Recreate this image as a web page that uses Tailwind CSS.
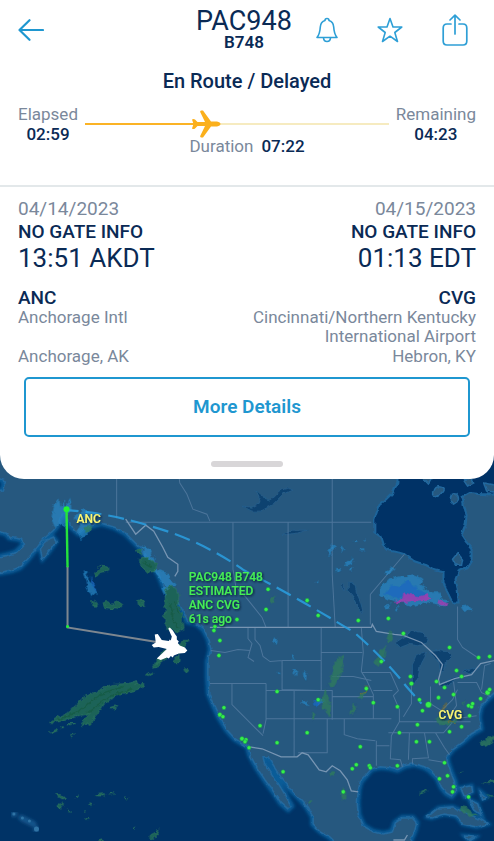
<!DOCTYPE html>
<html lang="en">
<head>
  <meta charset="UTF-8" />
  <meta name="viewport" content="width=device-width, initial-scale=1.0" />
  <title>PAC948 Flight Tracker</title>
  <script src="https://cdn.jsdelivr.net/npm/@tailwindcss/browser@4"></script>
</head>
<body class="min-h-screen flex flex-col bg-[#003366] font-[Roboto,sans-serif] text-[#0a2a55]">

  <!-- Flight Card -->
  <main class="relative z-10 bg-white rounded-b-[24px] pb-3">

    <!-- Top Bar -->
    <header class="grid grid-cols-[1fr_auto_1fr] pl-3 pr-[18px] pt-2 h-[61px]">
      <button aria-label="Back" class="w-[38px] h-[43px] flex justify-center items-center text-[#1f97d0]">
        <svg class="w-[26px] h-[22px]" viewBox="0 0 26 22" fill="none" stroke="currentColor" stroke-width="2.2" stroke-linecap="round" stroke-linejoin="round">
          <path d="M25 11H1.500M11.500 1.200L1.500 11L11.500 20.800" />
        </svg>
      </button>
      <div class="text-center">
        <h1 class="text-[27px] leading-[26px]">PAC948</h1>
        <p class="text-[17px] leading-4 font-semibold">B748</p>
      </div>
      <div class="flex justify-between items-center pl-6 pr-2 h-[43px] text-[#2e9fd6]">
        <button aria-label="Alerts">
          <svg class="w-[22px] h-[26px]" viewBox="0 0 22 26" fill="none" stroke="currentColor" stroke-width="1.600" stroke-linecap="round" stroke-linejoin="round">
            <path d="M9 3.500C9 .8 13 .8 13 3.500C16.500 4.500 17.500 7 17.700 10C18 15 18.500 17.500 21 20.500H1C3.500 17.500 4 15 4.300 10C4.500 7 5.500 4.500 9 3.500Z" />
            <path d="M7.500 20.800C7.800 25.800 14.200 25.800 14.500 20.800" />
          </svg>
        </button>
        <button aria-label="Favorite">
          <svg class="w-[26px] h-[26px]" viewBox="0 0 26 26" fill="none" stroke="currentColor" stroke-width="1.600" stroke-linejoin="round">
            <path d="M13 1.500L16 10H24.800L17.800 15.500L20.500 24.500L13 19.200L5.500 24.500L8.200 15.500L1.200 10H10Z" />
          </svg>
        </button>
        <button aria-label="Share">
          <svg class="w-[26px] h-8" viewBox="0 0 26 32" fill="none" stroke="currentColor" stroke-width="1.700" stroke-linecap="round" stroke-linejoin="round">
            <path d="M9 10H5Q1.200 10 1.200 14V27Q1.200 31 5 31H21Q24.800 31 24.800 27V14Q24.800 10 21 10H17" />
            <path d="M13 20V1.200M8 6L13 1.200L18 6" />
          </svg>
        </button>
      </div>
    </header>

    <!-- Progress -->
    <section class="px-[18px] pt-2 pb-[29px] border-b-2 border-[#e3e8ea]">
      <h2 class="text-center text-[20px] leading-6 font-medium">En Route / Delayed</h2>
      <div class="flex items-center mt-[11px] leading-5 text-center">
        <div>
          <p class="text-[17px] leading-5 text-[#7a889b]">Elapsed</p>
          <p class="text-[17px] leading-5 font-medium">02:59</p>
        </div>
        <div class="relative flex-1 mx-[7px] h-0.5 bg-[#f6ebc0]">
          <div class="h-0.5 bg-[#fbb325]" style="width: 40%"></div>
          <svg class="absolute left-[35%] top-1/2 -translate-y-1/2 w-[30px] h-7 text-[#fbb01c]" viewBox="0 0 30 28" fill="currentColor">
            <path d="M1 9.500Q2.500 8.500 4 9.500L6.500 12H14L9.200 2Q8.800 .6 10.200 .5H12L20 11.500H26Q29.500 12.200 29.500 14T26 16.500H20L12 27.500H10.200Q8.800 27.400 9.200 26L14 16H6.500L4 18.500Q2.500 19.500 1 18.500L2.500 14Z" />
          </svg>
        </div>
        <div>
          <p class="text-[17px] leading-5 text-[#7a889b]">Remaining</p>
          <p class="text-[17px] leading-5 font-medium">04:23</p>
        </div>
      </div>
      <p class="-mt-2 flex justify-center gap-2 text-[17px] leading-5">
        <span class="text-[#7a889b]">Duration</span>
        <span class="font-medium">07:22</span>
      </p>
    </section>

    <!-- Airports -->
    <section class="flex justify-between px-[18px] pt-[10px]">
      <div>
        <p class="text-[19px] leading-[23px] text-[#7a889b]">04/14/2023</p>
        <p class="text-[19px] leading-[23px] font-medium">NO GATE INFO</p>
        <p class="text-[26px] leading-[30px]">13:51 AKDT</p>
        <h3 class="mt-[15px] text-[19px] leading-5 font-medium">ANC</h3>
        <p class="text-[17px] leading-[19px] text-[#7a889b]">Anchorage Intl</p>
        <p class="mt-5 text-[17px] leading-[19px] text-[#7a889b]">Anchorage, AK</p>
      </div>
      <div class="text-right">
        <p class="text-[19px] leading-[23px] text-[#7a889b]">04/15/2023</p>
        <p class="text-[19px] leading-[23px] font-medium">NO GATE INFO</p>
        <p class="text-[26px] leading-[30px]">01:13 EDT</p>
        <h3 class="mt-[15px] text-[19px] leading-5 font-medium">CVG</h3>
        <p class="text-[17px] leading-[19px] text-[#7a889b]">Cincinnati/Northern Kentucky<br />International Airport</p>
        <p class="mt-px text-[17px] leading-[19px] text-[#7a889b]">Hebron, KY</p>
      </div>
    </section>

    <div class="px-6 pt-[11px]">
      <button class="w-full h-[60px] border-2 border-[#1f97d0] rounded-[5px] text-[19px] font-semibold text-[#1f97d0]">More Details</button>
    </div>
    <div class="mx-auto mt-6 w-[72px] h-1.5 rounded-full bg-[#d8d6d8]"></div>
  </main>

  <!-- Map -->
  <section class="relative -mt-6 flex-1 min-h-[385px]">
    <svg class="absolute inset-0 w-full h-full" viewBox="0 456 494 385" preserveAspectRatio="xMidYMax slice" font-family="Roboto, sans-serif">
      <defs>
        <filter id="glow" x="-10%" y="-10%" width="120%" height="120%"><feGaussianBlur stdDeviation="1.800" /></filter>
        <filter id="shade"><feDropShadow dx="1" dy="1" stdDeviation="0.800" flood-color="#00142b" /></filter>
        <filter id="rough" x="-5%" y="-5%" width="110%" height="110%">
          <feTurbulence type="fractalNoise" baseFrequency="0.200" numOctaves="2" seed="4" />
          <feDisplacementMap in="SourceGraphic" scale="6" xChannelSelector="R" yChannelSelector="G" />
        </filter>
        <filter id="coast" x="-5%" y="-5%" width="110%" height="110%">
          <feTurbulence type="fractalNoise" baseFrequency="0.150" numOctaves="2" seed="9" />
          <feDisplacementMap in="SourceGraphic" scale="4" xChannelSelector="R" yChannelSelector="G" />
        </filter>
        <path id="land" d="M-10 450V476L6 482L3 492L-10 494V530L7 534L10 538L22 540L25 545L17 553L8 556L-10 560V575L12 571L20 568L28 560L36 550L45 539L54 531L58 526L61 518L66 513L69 520L71 527L79 534L84 530L90 527L102 524L115 528L126 534L134 542L143 551L147 560L155 568L160 577L164 587L170 594L178 602L184 613L188 622L197 624L204 630L209 640L211 650L208 662L208 677L209 694L214 706L219 717L227 730L235 739L243 744L248 747L250 755L257 768L265 780L273 791L281 803L288 809L291 806L285 795L279 785L271 773L264 763L263 757L268 757L275 768L282 779L291 790L301 800L307 807L313 817L313 824L320 831L330 837L342 850H410V840L414 831L416 823L412 818L402 818L395 823L392 832L383 834L373 832L363 826L358 815L357 803L358 790L360 782L366 775L371 769L380 767L390 768L397 770L404 766L414 764L424 767L429 770L437 778L441 787L446 793L451 796L455 791L454 782L450 772L447 763L446 757L452 749L462 742L471 734L480 729L478 717L480 707L486 700L505 683V450Z" />
        <path id="water" d="M398 450L397 483L393 493L386 500L379 506L374 520L374 533L381 538L384 547L388 551L397 553L404 555L414 562L426 566L435 571L443 573L443 582L446 591L452 603L458 603L457 589L455 580L458 572L466 569L471 561L471 549L465 542L461 536L465 526L466 516L463 505L462 498L469 494L480 495L505 496V450Z" />
        <path id="isles" d="M41 550L46 541L54 538L57 542L50 552L43 560ZM432 494Q433 486 440 488Q446 489 439 496Q434 500 432 494ZM450 499Q451 494 456 495Q461 501 453 505Q449 503 450 499ZM463 481L469 479L473 484L467 487ZM421 478L428 485L433 477ZM483 484L486 492L494 493V486ZM452 560L457 554L462 560L461 566L455 566ZM427 817L438 808L452 807L465 813L479 819L487 824L476 827L462 824L456 816L444 814L431 818ZM460 788L471 786L472 792L464 797ZM469 800L477 804L481 815L474 810ZM480 792L486 797L482 799ZM464 836L475 837L469 841Z" />
      </defs>

      <!-- coastlines -->
      <g fill="none" stroke="#0b68a6" stroke-width="6" opacity="0.800" filter="url(#glow)">
        <use href="#land" /><use href="#isles" stroke-width="4" />
      </g>
      <g filter="url(#coast)">
        <use href="#land" fill="#28587f" stroke="#23699f" stroke-width="1.500" />
        <use href="#water" fill="#003366" stroke="#1f659b" stroke-width="2" />
        <use href="#isles" fill="#28587f" stroke="#23699f" stroke-width="1.500" />
      </g>
      <path fill="none" stroke="#14588f" stroke-width="6" stroke-linecap="round" opacity="0.900" filter="url(#glow)" d="M14 814h1M22 818L34 824M37 829v1" />
      <g fill="#2f73a5"><circle cx="14.500" cy="814" r="1.500" /><circle cx="23" cy="818" r="1.500" /><circle cx="30" cy="821" r="1.500" /><circle cx="37" cy="829" r="2.500" /></g>

      <!-- lakes -->
      <g fill="#10436f" stroke="#265f8d" stroke-width="0.800" filter="url(#coast)">
        <path d="M242 507L252 508L261 503L256 492L264 499L270 501L279 492L287 489L292 491L283 495L273 505L261 512L252 512ZM282 536L292 531L307 531L297 534L288 535ZM348 583L354 583L356 592L360 602L363 613L359 612L353 598L348 591ZM341 586L344 585L344 591ZM395 643L406 636L412 631L422 633L429 642L421 646L410 644L400 648ZM412 683L412 665L416 656L426 653L420 664L418 677L414 684ZM429 652L437 651L446 652L451 657L446 662L444 671L440 673L438 660L433 657ZM439 685L452 678L460 676L454 682L442 688ZM462 672L474 668L479 669L469 674Z" />
      </g>

      <!-- borders -->
      <g fill="none" stroke="#5c82a6" stroke-width="1" opacity="0.700">
        <path d="M117 470V519M126 523H371M178 470L180 484L187 495L193 510L207 515L210 522M233 523V570L236 588L246 598L262 618L266 628M288 523V628M332 470V575L335 628M404 555L370 595V625M457 607V640L462 648L477 658M248 628V639L252 644L248 658L254 662M255 628V640L260 646L263 657L270 662L282 661V690L321 691M210 628H248M211 651L225 653L238 650L250 651M321 628V691M321 653H362M282 661L321 661M210 684H266M266 684V720L263 734M232 684V705L263 736M294 691V757M266 691H332V720M266 719H391M327 719V753H298M344 719V735L357 739L375 741M332 697H373M332 677H353L371 681M361 628L363 653L361 672L366 680L373 695V719M362 673H390L398 691L393 696L399 710L399 722L391 736L390 759L400 760L402 767M376 741V766M376 746H389M373 691H392M388 733H443L455 719L476 716M411 685V704L403 717M430 687V704L441 711L452 700L457 690M399 722H470M409 733L408 760M424 733L428 758L412 759V764M435 733L444 748L449 755M428 760L446 763M457 683H476L481 693L490 697M453 682L456 706L449 716M481 690L484 666L490 664" />
      </g>
      <g fill="none" stroke="#7795b3" stroke-width="1.300">
        <path d="M126 520L136 535L146 526L154 532L163 548L168 558L178 565L178 572L175 577M210 628H371L372 625L376 632L394 635L403 636L421 643L435 656L442 665L438 680L439 685L454 679L471 675L480 664L494 661" />
        <path d="M248 747L262 749L281 757L297 757L302 753L308 755L319 770L326 772L332 766L340 771L347 780L351 791L358 792M393 840H404L407 835" />
      </g>

      <!-- weather -->
      <g filter="url(#rough)">
        <g fill="#2788c6" opacity="0.700">
          <path d="M57 503L60 499L61 508L65 502L67 508L71 498L72 512L66 516L67 529L60 525L55 529L52 519L54 509ZM73 517L80 514L84 509L92 514L99 521L92 524L88 535L81 540L78 532L81 525ZM143 546L150 550L155 561L150 569L144 560ZM152 568L166 572L176 586L168 590L160 580ZM84 571L88 572L89 581L94 586L97 594L92 598L87 588L86 580ZM161 588L168 587L171 598L167 602Z" />
          <path d="M380 588L389 579L400 577L412 575L424 580L420 586L430 592L439 592L441 600L449 601L443 606L426 603L412 607L398 602L387 600L380 596ZM384 574L391 568L395 570L388 576ZM383 607L391 604L388 611ZM396 608h2v4h-2zM344 565L353 558L353 563L347 566ZM328 553L332 545L335 548L330 556ZM336 568L340 570L336 573ZM341 547l3 2-2 3zM354 541h3v2h-3zM363 540l3 1-2 2zM360 549h4v2h-4zM350 568h3v3h-3zM460 606L468 605L472 612L463 611ZM315 581h2v3h-2z" />
          <path d="M292 670L297 671L296 677ZM303 672L307 672L306 680L303 678ZM291 655L295 655L293 661ZM278 672h2v3h-2zM274 638l3 1-1 5-3-1zM300 702L307 701L308 707ZM317 700L323 698L324 703L318 706Z" />
        </g>
        <path fill="#1a68bf" opacity="0.800" d="M384 595L392 585L399 587L408 581L417 590L426 594L421 601L402 599L391 597ZM91 577L95 584L97 592L93 586ZM312 703L318 701L322 703L316 707Z" />
        <path fill="#a33bb0" opacity="0.850" d="M394 603L402 599L403 593L411 595L418 597L426 595L432 600L421 601L409 602L398 604ZM439 601L447 604L445 606L438 604Z" />
        <g fill="#1c6458" stroke="#2f7c60" stroke-width="0.800">
          <path d="M50 723L58 718L68 714L76 706L86 697L97 692L113 685L128 684L138 682L136 685L144 684L143 688L130 692L118 695L104 705L98 715L90 724L83 727L83 722L90 714L79 716L68 720L60 722Z" />
          <path d="M166 590L171 587L176 589L179 596L178 606L183 617L184 629L177 632L168 629L165 620ZM141 557L152 561L157 564L156 572L147 573L141 567ZM136 552L142 549L140 555ZM95 574L102 567L109 568L109 572L101 573L97 577ZM103 604L107 602L113 605L120 602L122 606L117 610L105 608ZM92 601L97 604L96 607L93 606ZM138 601L142 601L145 606L139 606Z" />
          <path d="M152 669L157 662L163 661L158 667ZM147 676L152 673L153 674L149 677ZM173 661L179 656L179 663L175 663ZM175 650L184 641L188 641L184 648L180 654ZM155 664L165 651L170 655L163 662ZM185 668L188 670L186 672ZM51 732L57 730L58 731L53 733ZM61 728L64 727L64 728ZM66 724L75 724L70 725ZM72 736L75 734L73 736ZM110 708L117 706L114 709Z" />
          <path d="M56 795L61 795L66 798L63 799ZM59 804L62 803L64 804L62 808L59 808ZM75 798L80 795L78 797ZM95 795L105 794L104 796L96 796ZM110 794L114 793L112 794ZM124 797L128 798L127 798ZM90 804L93 805L92 806ZM68 810L72 812L70 812ZM84 811L86 811ZM85 818L90 818L88 818ZM133 829L135 827L134 830ZM149 837L156 832L159 829L158 834L152 840ZM99 841L102 840L104 841Z" />
        </g>
        <g fill="#2e7a5e" opacity="0.800">
          <path d="M329 686L332 668L337 660L343 656L343 665L340 676L334 687ZM270 600L274 596L275 601L272 604ZM373 665L380 652L386 646L384 656L379 667ZM386 638L390 631L392 640L388 644ZM349 715L354 704L357 707L352 715ZM358 699L361 693L368 689L365 696ZM311 717L313 712L316 716L313 720ZM321 700L325 690L328 699L331 706L330 718L327 714L323 708ZM329 773L333 771L335 775L332 777ZM341 794L343 787L346 794L346 801L342 799ZM308 802L311 800L313 802L309 804ZM435 718L440 714L442 720L450 721L458 718L455 723L447 726L437 725ZM479 745L488 737L495 734L490 745L481 748ZM481 783L490 780H496V783ZM419 793L427 789L427 791L420 795ZM485 795L493 797L490 798ZM459 806L465 807L472 812L476 816L469 817L462 812ZM457 773L462 770L460 773ZM461 702L465 700L463 705ZM83 529L90 527L93 529L86 534Z" />
        </g>
        <path fill="none" stroke="#195a44" stroke-width="1.400" d="M58 720L81 711L99 696L124 687M88 713L108 698L132 689M170 604L173 612L172 621L179 628M175 602L180 614M144 563L153 568" />
        <path fill="none" stroke="#7b7032" stroke-width="1.500" opacity="0.800" d="M360 694L366 692L367 687M438 714L443 710L445 704M448 721L455 724" />
      </g>

      <!-- route -->
      <path fill="none" stroke="#2a9bdc" stroke-width="2.200" stroke-dasharray="16 7" stroke-dashoffset="4" opacity="0.900" d="M67 511Q110 514 151 527Q201 541 244 571Q295 597 354 633Q386 661 406 687L421 704" />
      <path fill="none" stroke="#7d8790" stroke-width="2" d="M68 567V628L160 643" />
      <path fill="none" stroke="#25e33b" stroke-width="2.400" d="M67 511L68 568" />
      <circle cx="67" cy="510" r="3" fill="#20f236" />
      <circle cx="68" cy="627" r="1.500" fill="#20f236" />

      <g id="traffic" fill="#35f04a" stroke="#1b8a50" stroke-width="0.500"></g>

      <path fill="#fff" d="M187.500 651L185 653.500L179 654L174 656L173 658L171 656.500L169 659L167 658L161 660.500L157 659L167 649.500L159 647.500L154 648L152 645.500L156 643L155 635L158 634.500L162 640.500L169 641.500L170 640L171 641L172 637L171 635L168.500 629L170 628L173 631L175.500 635L177 637L177 640L179 642L178 643.500L180 646L185 648Z" />

      <g filter="url(#shade)" font-size="12" font-weight="500">
        <text x="77" y="524" fill="#fdf771">ANC</text>
        <text x="438" y="719" fill="#fdf771">CVG</text>
        <g fill="#45ee55">
          <text x="189" y="582">PAC948 B748</text>
          <text x="189" y="596">ESTIMATED</text>
          <text x="189" y="610">ANC CVG</text>
          <text x="189" y="624">61s ago</text>
        </g>
      </g>
    </svg>
  </section>

  <script>
    // other traffic on the map: x, y, radius
    const traffic = [
      [237, 620], [215, 627], [214, 631], [220, 641], [219, 656], [268, 590], [266, 610], [307, 601], [318, 616], [358, 621],
      [388, 619], [403, 634], [449, 648], [478, 658], [489, 657], [381, 662], [277, 692], [318, 700], [366, 689], [373, 703],
      [397, 707], [422, 711], [419, 700], [410, 677], [411, 684, 2.2], [436, 682], [444, 688], [438, 698], [453, 695], [456, 671, 2],
      [461, 677], [487, 693, 2.5], [489, 690], [480, 699], [468, 706], [471, 707], [472, 704], [469, 716], [461, 727], [449, 732],
      [417, 725], [399, 733], [416, 742], [429, 742], [444, 763], [447, 776], [439, 779], [453, 787], [452, 792, 2], [468, 797],
      [397, 766], [369, 766], [370, 768], [352, 769], [356, 765], [360, 747, 2], [307, 733], [277, 743], [260, 726], [283, 772],
      [343, 792], [224, 708], [220, 715, 2.2], [223, 717], [242, 739, 2.2], [246, 740, 2], [245, 742], [249, 748], [428, 705, 3]
    ];

    const svgNS = "http://www.w3.org/2000/svg";
    const layer = document.getElementById("traffic");
    traffic.forEach(([x, y, r]) => {
      const dot = document.createElementNS(svgNS, "circle");
      dot.setAttribute("cx", x);
      dot.setAttribute("cy", y);
      dot.setAttribute("r", r || 2);
      layer.appendChild(dot);
    });
  </script>

</body>
</html>
